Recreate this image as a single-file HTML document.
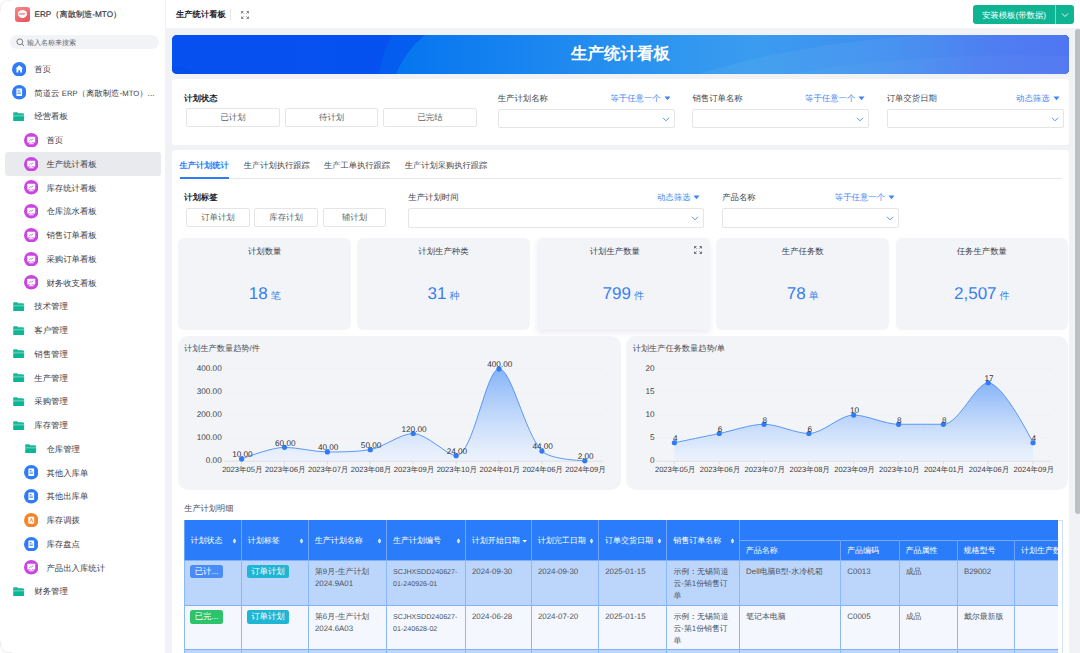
<!DOCTYPE html>
<html><head><meta charset="utf-8"><title>生产统计看板</title>
<style>
*{margin:0;padding:0;box-sizing:border-box}
html,body{width:1080px;height:653px;overflow:hidden;background:#f1f2f6;font-family:"Liberation Sans",sans-serif;color:#3d4149;text-rendering:geometricPrecision}
.a{position:absolute;white-space:nowrap}
#side{position:absolute;left:0;top:0;width:165.2px;height:653px;background:#fff}
.si{position:absolute;left:0;width:165px;height:24px;font-size:8.6px;color:#434750;line-height:24px}
.ic{position:absolute;width:14.5px;height:14.5px;border-radius:50%;top:4.75px}
.fold{position:absolute;width:11.5px;height:9px;top:7.5px}
#top{position:absolute;left:166.4px;top:0;width:914px;height:28.3px;background:#fff}
.card{position:absolute;background:#fff;border-radius:3px}
.lbl{position:absolute;font-size:8.4px;color:#41454d;white-space:nowrap;line-height:12px}
.blbl{position:absolute;font-size:8.4px;color:#1f2329;font-weight:bold;white-space:nowrap;line-height:12px}
.btn{position:absolute;border:1px solid #e3e5e9;border-radius:2px;font-size:8.4px;color:#5b5f67;text-align:center;background:#fff}
.sel{position:absolute;border:1px solid #e3e5e9;border-radius:2px;background:#fff}
.link{position:absolute;font-size:8.4px;color:#3e84f4;white-space:nowrap;line-height:12px;text-align:right}
.stat{position:absolute;background:#f3f4f7;border-radius:6px}
.stt{position:absolute;left:0;right:0;text-align:center;font-size:8.4px;color:#41454d;line-height:12px}
.stv{position:absolute;left:0;right:0;text-align:center;color:#3a7ff0;line-height:20px}
.chart{position:absolute;background:#f3f4f7;border-radius:10px}
</style></head><body>
<div id="side"><div class="a" style="left:0;top:0;width:12px;height:12px;border-top-left-radius:8px;border-left:1px solid #f2f2f2;border-top:1px solid #f2f2f2"></div><div class="a" style="left:0;top:641px;width:12px;height:12px;border-bottom-left-radius:8px;border-left:1px solid #eeeeee;border-bottom:1px solid #eeeeee"></div><div class="a" style="left:15px;top:7px;width:14.5px;height:14.5px;border-radius:3px;background:linear-gradient(150deg,#f58a89,#e7525a)"><div style="position:absolute;left:2.8px;top:3.3px;width:9px;height:8px;border-radius:50%;background:#fff"></div><div style="position:absolute;left:0;top:5.6px;width:14.5px;text-align:center;font-size:3px;line-height:3.5px;font-weight:bold;color:#e85a5f">ERP</div></div><div class="a" style="left:34.5px;top:8px;font-size:8.2px;line-height:14px;color:#30343b;-webkit-text-stroke:0.15px #30343b">ERP（离散制造-MTO）</div><div class="a" style="left:9.5px;top:35px;width:149px;height:14px;border-radius:7px;background:#f2f3f6"></div><svg class="a" style="left:15.5px;top:38px" width="9" height="9" viewBox="0 0 9 9"><circle cx="3.8" cy="3.8" r="2.9" fill="none" stroke="#6b6f78" stroke-width="0.9"/><line x1="6" y1="6" x2="8" y2="8" stroke="#6b6f78" stroke-width="0.9"/></svg><div class="a" style="left:27px;top:37.5px;font-size:7px;line-height:12px;color:#62666e">输入名称来搜索</div><svg class="a" style="left:11.75px;top:61.50px" width="14.5" height="14.5" viewBox="0 0 14.5 14.5"><circle cx="7.25" cy="7.25" r="7.25" fill="#2f7cf6"/><path d="M7.25 3.2 L11 6.6 L10 6.6 L10 10.6 L8.2 10.6 L8.2 8.3 L6.3 8.3 L6.3 10.6 L4.5 10.6 L4.5 6.6 L3.5 6.6 Z" fill="#fff"/></svg><div class="a" style="left:34.30px;top:62.75px;font-size:8.4px;line-height:12px;color:#3c4048">首页</div><svg class="a" style="left:11.75px;top:85.25px" width="14.5" height="14.5" viewBox="0 0 14.5 14.5"><circle cx="7.25" cy="7.25" r="7.25" fill="#2f7cf6"/><rect x="4.4" y="3.4" width="5.7" height="7.7" rx="0.6" fill="#fff"/><rect x="5.5" y="5.3" width="2.2" height="0.7" fill="#2f7cf6"/><rect x="5.5" y="6.7" width="3.4" height="0.7" fill="#2f7cf6"/><rect x="5.5" y="8.1" width="3.4" height="0.7" fill="#2f7cf6"/></svg><div class="a" style="left:34.30px;top:86.50px;font-size:8.4px;line-height:12px;color:#3c4048">简道云 <span style="font-size:7.7px">ERP</span>（离散制造-<span style="font-size:7.7px">MTO</span>）...</div><svg class="a" style="left:13.20px;top:111.85px" width="12" height="10" viewBox="0 0 12 10"><path d="M0.2,1 Q0.2,0.2 1,0.2 L4.3,0.2 L5.3,1.3 L10.1,1.3 Q10.9,1.3 10.9,2.1 L10.9,8.4 Q10.9,9.1 10.2,9.1 L1,9.1 Q0.2,9.1 0.2,8.4 Z" fill="#1ab998"/><rect x="0.2" y="3.5" width="11" height="1" fill="#8fdcc9"/><path d="M1.4,4.5 L11.4,4.5 L10.5,8.6 Q10.4,9.1 9.9,9.1 L1.2,9.1 Q0.6,9.1 0.7,8.5 Z" fill="#0cb596"/></svg><div class="a" style="left:34.30px;top:110.25px;font-size:8.4px;line-height:12px;color:#3c4048">经营看板</div><svg class="a" style="left:23.65px;top:132.75px" width="14.5" height="14.5" viewBox="0 0 14.5 14.5"><circle cx="7.25" cy="7.25" r="7.25" fill="#c945e2"/><rect x="3.3" y="3.8" width="7.9" height="5.6" rx="0.5" fill="#fff"/><rect x="6.5" y="9.3" width="1.5" height="1.1" fill="#fff"/><rect x="4.7" y="10.3" width="5.1" height="1" rx="0.3" fill="#fff"/><path d="M5.2 7.6 L6.8 6.5 L7.7 7.1 L9.4 5.6" stroke="#c945e2" stroke-width="0.75" fill="none"/></svg><div class="a" style="left:46.40px;top:134.00px;font-size:8.4px;line-height:12px;color:#3c4048">首页</div><div class="a" style="left:5px;top:152.00px;width:155.5px;height:23.5px;border-radius:3px;background:#e9eaee"></div><svg class="a" style="left:23.65px;top:156.50px" width="14.5" height="14.5" viewBox="0 0 14.5 14.5"><circle cx="7.25" cy="7.25" r="7.25" fill="#c945e2"/><rect x="3.3" y="3.8" width="7.9" height="5.6" rx="0.5" fill="#fff"/><rect x="6.5" y="9.3" width="1.5" height="1.1" fill="#fff"/><rect x="4.7" y="10.3" width="5.1" height="1" rx="0.3" fill="#fff"/><path d="M5.2 7.6 L6.8 6.5 L7.7 7.1 L9.4 5.6" stroke="#c945e2" stroke-width="0.75" fill="none"/></svg><div class="a" style="left:46.40px;top:157.75px;font-size:8.4px;line-height:12px;color:#3c4048">生产统计看板</div><svg class="a" style="left:23.65px;top:180.25px" width="14.5" height="14.5" viewBox="0 0 14.5 14.5"><circle cx="7.25" cy="7.25" r="7.25" fill="#c945e2"/><rect x="3.3" y="3.8" width="7.9" height="5.6" rx="0.5" fill="#fff"/><rect x="6.5" y="9.3" width="1.5" height="1.1" fill="#fff"/><rect x="4.7" y="10.3" width="5.1" height="1" rx="0.3" fill="#fff"/><path d="M5.2 7.6 L6.8 6.5 L7.7 7.1 L9.4 5.6" stroke="#c945e2" stroke-width="0.75" fill="none"/></svg><div class="a" style="left:46.40px;top:181.50px;font-size:8.4px;line-height:12px;color:#3c4048">库存统计看板</div><svg class="a" style="left:23.65px;top:204.00px" width="14.5" height="14.5" viewBox="0 0 14.5 14.5"><circle cx="7.25" cy="7.25" r="7.25" fill="#c945e2"/><rect x="3.3" y="3.8" width="7.9" height="5.6" rx="0.5" fill="#fff"/><rect x="6.5" y="9.3" width="1.5" height="1.1" fill="#fff"/><rect x="4.7" y="10.3" width="5.1" height="1" rx="0.3" fill="#fff"/><path d="M5.2 7.6 L6.8 6.5 L7.7 7.1 L9.4 5.6" stroke="#c945e2" stroke-width="0.75" fill="none"/></svg><div class="a" style="left:46.40px;top:205.25px;font-size:8.4px;line-height:12px;color:#3c4048">仓库流水看板</div><svg class="a" style="left:23.65px;top:227.75px" width="14.5" height="14.5" viewBox="0 0 14.5 14.5"><circle cx="7.25" cy="7.25" r="7.25" fill="#c945e2"/><rect x="3.3" y="3.8" width="7.9" height="5.6" rx="0.5" fill="#fff"/><rect x="6.5" y="9.3" width="1.5" height="1.1" fill="#fff"/><rect x="4.7" y="10.3" width="5.1" height="1" rx="0.3" fill="#fff"/><path d="M5.2 7.6 L6.8 6.5 L7.7 7.1 L9.4 5.6" stroke="#c945e2" stroke-width="0.75" fill="none"/></svg><div class="a" style="left:46.40px;top:229.00px;font-size:8.4px;line-height:12px;color:#3c4048">销售订单看板</div><svg class="a" style="left:23.65px;top:251.50px" width="14.5" height="14.5" viewBox="0 0 14.5 14.5"><circle cx="7.25" cy="7.25" r="7.25" fill="#c945e2"/><rect x="3.3" y="3.8" width="7.9" height="5.6" rx="0.5" fill="#fff"/><rect x="6.5" y="9.3" width="1.5" height="1.1" fill="#fff"/><rect x="4.7" y="10.3" width="5.1" height="1" rx="0.3" fill="#fff"/><path d="M5.2 7.6 L6.8 6.5 L7.7 7.1 L9.4 5.6" stroke="#c945e2" stroke-width="0.75" fill="none"/></svg><div class="a" style="left:46.40px;top:252.75px;font-size:8.4px;line-height:12px;color:#3c4048">采购订单看板</div><svg class="a" style="left:23.65px;top:275.25px" width="14.5" height="14.5" viewBox="0 0 14.5 14.5"><circle cx="7.25" cy="7.25" r="7.25" fill="#c945e2"/><rect x="3.3" y="3.8" width="7.9" height="5.6" rx="0.5" fill="#fff"/><rect x="6.5" y="9.3" width="1.5" height="1.1" fill="#fff"/><rect x="4.7" y="10.3" width="5.1" height="1" rx="0.3" fill="#fff"/><path d="M5.2 7.6 L6.8 6.5 L7.7 7.1 L9.4 5.6" stroke="#c945e2" stroke-width="0.75" fill="none"/></svg><div class="a" style="left:46.40px;top:276.50px;font-size:8.4px;line-height:12px;color:#3c4048">财务收支看板</div><svg class="a" style="left:13.20px;top:301.85px" width="12" height="10" viewBox="0 0 12 10"><path d="M0.2,1 Q0.2,0.2 1,0.2 L4.3,0.2 L5.3,1.3 L10.1,1.3 Q10.9,1.3 10.9,2.1 L10.9,8.4 Q10.9,9.1 10.2,9.1 L1,9.1 Q0.2,9.1 0.2,8.4 Z" fill="#1ab998"/><rect x="0.2" y="3.5" width="11" height="1" fill="#8fdcc9"/><path d="M1.4,4.5 L11.4,4.5 L10.5,8.6 Q10.4,9.1 9.9,9.1 L1.2,9.1 Q0.6,9.1 0.7,8.5 Z" fill="#0cb596"/></svg><div class="a" style="left:34.30px;top:300.25px;font-size:8.4px;line-height:12px;color:#3c4048">技术管理</div><svg class="a" style="left:13.20px;top:325.60px" width="12" height="10" viewBox="0 0 12 10"><path d="M0.2,1 Q0.2,0.2 1,0.2 L4.3,0.2 L5.3,1.3 L10.1,1.3 Q10.9,1.3 10.9,2.1 L10.9,8.4 Q10.9,9.1 10.2,9.1 L1,9.1 Q0.2,9.1 0.2,8.4 Z" fill="#1ab998"/><rect x="0.2" y="3.5" width="11" height="1" fill="#8fdcc9"/><path d="M1.4,4.5 L11.4,4.5 L10.5,8.6 Q10.4,9.1 9.9,9.1 L1.2,9.1 Q0.6,9.1 0.7,8.5 Z" fill="#0cb596"/></svg><div class="a" style="left:34.30px;top:324.00px;font-size:8.4px;line-height:12px;color:#3c4048">客户管理</div><svg class="a" style="left:13.20px;top:349.35px" width="12" height="10" viewBox="0 0 12 10"><path d="M0.2,1 Q0.2,0.2 1,0.2 L4.3,0.2 L5.3,1.3 L10.1,1.3 Q10.9,1.3 10.9,2.1 L10.9,8.4 Q10.9,9.1 10.2,9.1 L1,9.1 Q0.2,9.1 0.2,8.4 Z" fill="#1ab998"/><rect x="0.2" y="3.5" width="11" height="1" fill="#8fdcc9"/><path d="M1.4,4.5 L11.4,4.5 L10.5,8.6 Q10.4,9.1 9.9,9.1 L1.2,9.1 Q0.6,9.1 0.7,8.5 Z" fill="#0cb596"/></svg><div class="a" style="left:34.30px;top:347.75px;font-size:8.4px;line-height:12px;color:#3c4048">销售管理</div><svg class="a" style="left:13.20px;top:373.10px" width="12" height="10" viewBox="0 0 12 10"><path d="M0.2,1 Q0.2,0.2 1,0.2 L4.3,0.2 L5.3,1.3 L10.1,1.3 Q10.9,1.3 10.9,2.1 L10.9,8.4 Q10.9,9.1 10.2,9.1 L1,9.1 Q0.2,9.1 0.2,8.4 Z" fill="#1ab998"/><rect x="0.2" y="3.5" width="11" height="1" fill="#8fdcc9"/><path d="M1.4,4.5 L11.4,4.5 L10.5,8.6 Q10.4,9.1 9.9,9.1 L1.2,9.1 Q0.6,9.1 0.7,8.5 Z" fill="#0cb596"/></svg><div class="a" style="left:34.30px;top:371.50px;font-size:8.4px;line-height:12px;color:#3c4048">生产管理</div><svg class="a" style="left:13.20px;top:396.85px" width="12" height="10" viewBox="0 0 12 10"><path d="M0.2,1 Q0.2,0.2 1,0.2 L4.3,0.2 L5.3,1.3 L10.1,1.3 Q10.9,1.3 10.9,2.1 L10.9,8.4 Q10.9,9.1 10.2,9.1 L1,9.1 Q0.2,9.1 0.2,8.4 Z" fill="#1ab998"/><rect x="0.2" y="3.5" width="11" height="1" fill="#8fdcc9"/><path d="M1.4,4.5 L11.4,4.5 L10.5,8.6 Q10.4,9.1 9.9,9.1 L1.2,9.1 Q0.6,9.1 0.7,8.5 Z" fill="#0cb596"/></svg><div class="a" style="left:34.30px;top:395.25px;font-size:8.4px;line-height:12px;color:#3c4048">采购管理</div><svg class="a" style="left:13.20px;top:420.60px" width="12" height="10" viewBox="0 0 12 10"><path d="M0.2,1 Q0.2,0.2 1,0.2 L4.3,0.2 L5.3,1.3 L10.1,1.3 Q10.9,1.3 10.9,2.1 L10.9,8.4 Q10.9,9.1 10.2,9.1 L1,9.1 Q0.2,9.1 0.2,8.4 Z" fill="#1ab998"/><rect x="0.2" y="3.5" width="11" height="1" fill="#8fdcc9"/><path d="M1.4,4.5 L11.4,4.5 L10.5,8.6 Q10.4,9.1 9.9,9.1 L1.2,9.1 Q0.6,9.1 0.7,8.5 Z" fill="#0cb596"/></svg><div class="a" style="left:34.30px;top:419.00px;font-size:8.4px;line-height:12px;color:#3c4048">库存管理</div><svg class="a" style="left:25.10px;top:444.35px" width="12" height="10" viewBox="0 0 12 10"><path d="M0.2,1 Q0.2,0.2 1,0.2 L4.3,0.2 L5.3,1.3 L10.1,1.3 Q10.9,1.3 10.9,2.1 L10.9,8.4 Q10.9,9.1 10.2,9.1 L1,9.1 Q0.2,9.1 0.2,8.4 Z" fill="#1ab998"/><rect x="0.2" y="3.5" width="11" height="1" fill="#8fdcc9"/><path d="M1.4,4.5 L11.4,4.5 L10.5,8.6 Q10.4,9.1 9.9,9.1 L1.2,9.1 Q0.6,9.1 0.7,8.5 Z" fill="#0cb596"/></svg><div class="a" style="left:46.40px;top:442.75px;font-size:8.4px;line-height:12px;color:#3c4048">仓库管理</div><svg class="a" style="left:23.65px;top:465.25px" width="14.5" height="14.5" viewBox="0 0 14.5 14.5"><circle cx="7.25" cy="7.25" r="7.25" fill="#2f7cf6"/><rect x="4.4" y="3.4" width="5.7" height="7.7" rx="0.6" fill="#fff"/><rect x="5.5" y="5.3" width="2.2" height="0.7" fill="#2f7cf6"/><rect x="5.5" y="6.7" width="3.4" height="0.7" fill="#2f7cf6"/><rect x="5.5" y="8.1" width="3.4" height="0.7" fill="#2f7cf6"/></svg><div class="a" style="left:46.40px;top:466.50px;font-size:8.4px;line-height:12px;color:#3c4048">其他入库单</div><svg class="a" style="left:23.65px;top:489.00px" width="14.5" height="14.5" viewBox="0 0 14.5 14.5"><circle cx="7.25" cy="7.25" r="7.25" fill="#2f7cf6"/><rect x="4.4" y="3.4" width="5.7" height="7.7" rx="0.6" fill="#fff"/><rect x="5.5" y="5.3" width="2.2" height="0.7" fill="#2f7cf6"/><rect x="5.5" y="6.7" width="3.4" height="0.7" fill="#2f7cf6"/><rect x="5.5" y="8.1" width="3.4" height="0.7" fill="#2f7cf6"/></svg><div class="a" style="left:46.40px;top:490.25px;font-size:8.4px;line-height:12px;color:#3c4048">其他出库单</div><svg class="a" style="left:23.65px;top:512.75px" width="14.5" height="14.5" viewBox="0 0 14.5 14.5"><circle cx="7.25" cy="7.25" r="7.25" fill="#f7842b"/><rect x="4.3" y="3.8" width="5.9" height="6.9" rx="0.6" fill="#fff"/><path d="M5.7 9.3 L7.25 5.3 L8.8 9.3" stroke="#f7842b" stroke-width="0.8" fill="none"/></svg><div class="a" style="left:46.40px;top:514.00px;font-size:8.4px;line-height:12px;color:#3c4048">库存调拨</div><svg class="a" style="left:23.65px;top:536.50px" width="14.5" height="14.5" viewBox="0 0 14.5 14.5"><circle cx="7.25" cy="7.25" r="7.25" fill="#2f7cf6"/><rect x="4.4" y="3.4" width="5.7" height="7.7" rx="0.6" fill="#fff"/><rect x="5.5" y="5.3" width="2.2" height="0.7" fill="#2f7cf6"/><rect x="5.5" y="6.7" width="3.4" height="0.7" fill="#2f7cf6"/><rect x="5.5" y="8.1" width="3.4" height="0.7" fill="#2f7cf6"/></svg><div class="a" style="left:46.40px;top:537.75px;font-size:8.4px;line-height:12px;color:#3c4048">库存盘点</div><svg class="a" style="left:23.65px;top:560.25px" width="14.5" height="14.5" viewBox="0 0 14.5 14.5"><circle cx="7.25" cy="7.25" r="7.25" fill="#c945e2"/><rect x="3.3" y="3.8" width="7.9" height="5.6" rx="0.5" fill="#fff"/><rect x="6.5" y="9.3" width="1.5" height="1.1" fill="#fff"/><rect x="4.7" y="10.3" width="5.1" height="1" rx="0.3" fill="#fff"/><path d="M5.2 7.6 L6.8 6.5 L7.7 7.1 L9.4 5.6" stroke="#c945e2" stroke-width="0.75" fill="none"/></svg><div class="a" style="left:46.40px;top:561.50px;font-size:8.4px;line-height:12px;color:#3c4048">产品出入库统计</div><svg class="a" style="left:13.20px;top:586.85px" width="12" height="10" viewBox="0 0 12 10"><path d="M0.2,1 Q0.2,0.2 1,0.2 L4.3,0.2 L5.3,1.3 L10.1,1.3 Q10.9,1.3 10.9,2.1 L10.9,8.4 Q10.9,9.1 10.2,9.1 L1,9.1 Q0.2,9.1 0.2,8.4 Z" fill="#1ab998"/><rect x="0.2" y="3.5" width="11" height="1" fill="#8fdcc9"/><path d="M1.4,4.5 L11.4,4.5 L10.5,8.6 Q10.4,9.1 9.9,9.1 L1.2,9.1 Q0.6,9.1 0.7,8.5 Z" fill="#0cb596"/></svg><div class="a" style="left:34.30px;top:585.25px;font-size:8.4px;line-height:12px;color:#3c4048">财务管理</div></div><div id="top"></div><div class="a" style="left:176px;top:8px;font-size:8.3px;line-height:12px;color:#1f2329;font-weight:bold">生产统计看板</div><div class="a" style="left:230px;top:9px;width:1px;height:11px;background:#e5e6eb"></div><svg class="a" style="left:241px;top:10.5px" width="8" height="8" viewBox="0 0 8 8" fill="none" stroke="#6b6f78" stroke-width="0.8"><path d="M0.5 2.5V0.5H2.5M5.5 0.5H7.5V2.5M7.5 5.5V7.5H5.5M2.5 7.5H0.5V5.5"/><path d="M0.7 0.7L2.6 2.6M7.3 0.7L5.4 2.6M7.3 7.3L5.4 5.4M0.7 7.3L2.6 5.4"/></svg><div class="a" style="left:972.5px;top:5px;width:101.5px;height:19px;border-radius:3px;background:#0fb493"></div><div class="a" style="left:1055.3px;top:5px;width:0.8px;height:19px;background:#7fd8bf"></div><div class="a" style="left:972.5px;top:8.5px;width:83px;text-align:center;font-size:8.4px;line-height:12px;color:#fff">安装模板(带数据)</div><svg class="a" style="left:1061px;top:11.5px" width="8" height="6" viewBox="0 0 8 6"><path d="M1 1.5 L4 4.5 L7 1.5" stroke="#fff" stroke-width="0.9" fill="none"/></svg><div class="a" style="left:1075.3px;top:29px;width:6px;height:485px;border-radius:3px;background:#bcbfc5"></div><div class="a" style="left:172px;top:35px;width:897px;height:38.5px;border-radius:5px;overflow:hidden;background:#0550ef">
<svg style="position:absolute;left:0;top:0" width="897" height="39" viewBox="0 0 897 39">
<defs><linearGradient id="bg2" gradientUnits="userSpaceOnUse" x1="224" y1="0" x2="897" y2="0">
<stop offset="0" stop-color="#0575f0"/><stop offset="0.4" stop-color="#2e95ef"/><stop offset="0.53" stop-color="#3a9cef"/><stop offset="0.73" stop-color="#3f8ff0"/><stop offset="0.89" stop-color="#4577f1"/><stop offset="1" stop-color="#466ff2"/></linearGradient>
<linearGradient id="bg0" x1="0" y1="0" x2="1" y2="0"><stop offset="0" stop-color="#0650ef"/><stop offset="1" stop-color="#0556ef"/></linearGradient></defs>
<rect x="0" y="0" width="897" height="39" fill="url(#bg0)"/>
<path d="M0,30 Q20,36 30,39 L0,39 Z" fill="#034ae8" opacity="0.5"/>
<path d="M207,39 Q211,14 221,0 L897,0 L897,39 Z" fill="#055def"/>
<path d="M224,39 Q234,15 253,0 L897,0 L897,39 Z" fill="url(#bg2)"/>
<path d="M527,39 C590,18 680,4 760,0 L897,0 L897,39 Z" fill="#ffffff" opacity="0.05"/>
<path d="M618,39 C700,24 800,18 897,21 L897,39 Z" fill="#ffffff" opacity="0.03"/>
</svg>
<div style="position:absolute;left:0;right:0;top:9px;text-align:center;font-size:16.5px;line-height:20px;font-weight:bold;color:#fff">生产统计看板</div></div><div class="card" style="left:172px;top:79px;width:897px;height:65.5px"></div><div class="blbl" style="left:184px;top:92px">计划状态</div><div class="btn" style="left:186.40px;top:108.3px;width:93.30px;height:19.2px;line-height:17.2px">已计划</div><div class="btn" style="left:284.80px;top:108.3px;width:93.70px;height:19.2px;line-height:17.2px">待计划</div><div class="btn" style="left:383.20px;top:108.3px;width:93.70px;height:19.2px;line-height:17.2px">已完结</div><div class="lbl" style="left:497.70px;top:92px">生产计划名称</div><div class="link" style="right:419.30px;top:92px">等于任意一个</div><svg class="a" style="left:663.70px;top:95.50px" width="7" height="5" viewBox="0 0 7 5"><path d="M0.5 0.5 L6.5 0.5 L3.5 4.2 Z" fill="#3e84f4"/></svg><div class="sel" style="left:497.70px;top:109.3px;width:177.00px;height:18.9px"></div><svg class="a" style="left:661.70px;top:117.00px" width="8" height="5" viewBox="0 0 8 5"><path d="M1 0.8 L4 3.8 L7 0.8" stroke="#3e84f4" stroke-width="0.9" fill="none"/></svg><div class="lbl" style="left:692.40px;top:92px">销售订单名称</div><div class="link" style="right:224.70px;top:92px">等于任意一个</div><svg class="a" style="left:858.30px;top:95.50px" width="7" height="5" viewBox="0 0 7 5"><path d="M0.5 0.5 L6.5 0.5 L3.5 4.2 Z" fill="#3e84f4"/></svg><div class="sel" style="left:692.40px;top:109.3px;width:176.90px;height:18.9px"></div><svg class="a" style="left:856.30px;top:117.00px" width="8" height="5" viewBox="0 0 8 5"><path d="M1 0.8 L4 3.8 L7 0.8" stroke="#3e84f4" stroke-width="0.9" fill="none"/></svg><div class="lbl" style="left:886.70px;top:92px">订单交货日期</div><div class="link" style="right:30.40px;top:92px">动态筛选</div><svg class="a" style="left:1052.60px;top:95.50px" width="7" height="5" viewBox="0 0 7 5"><path d="M0.5 0.5 L6.5 0.5 L3.5 4.2 Z" fill="#3e84f4"/></svg><div class="sel" style="left:886.70px;top:109.3px;width:176.90px;height:18.9px"></div><svg class="a" style="left:1050.60px;top:117.00px" width="8" height="5" viewBox="0 0 8 5"><path d="M1 0.8 L4 3.8 L7 0.8" stroke="#3e84f4" stroke-width="0.9" fill="none"/></svg><div class="card" style="left:172px;top:150px;width:897px;height:510px"></div><div class="a" style="left:179.50px;top:159.6px;font-size:8.2px;line-height:12px;color:#2f7cf6;font-weight:bold">生产计划统计</div><div class="a" style="left:243.80px;top:159.6px;font-size:8.25px;line-height:12px;color:#41454d">生产计划执行跟踪</div><div class="a" style="left:323.90px;top:159.6px;font-size:8.25px;line-height:12px;color:#41454d">生产工单执行跟踪</div><div class="a" style="left:404.80px;top:159.6px;font-size:8.25px;line-height:12px;color:#41454d">生产计划采购执行跟踪</div><div class="a" style="left:179px;top:178px;width:883px;height:1px;background:#e5e6eb"></div><div class="a" style="left:179.5px;top:176.8px;width:49px;height:2px;background:#2f7cf6"></div><div class="blbl" style="left:184px;top:191px">计划标签</div><div class="btn" style="left:186.10px;top:208px;width:63.60px;height:18.8px;line-height:16.8px">订单计划</div><div class="btn" style="left:254.40px;top:208px;width:63.40px;height:18.8px;line-height:16.8px">库存计划</div><div class="btn" style="left:323.00px;top:208px;width:63.10px;height:18.8px;line-height:16.8px">辅计划</div><div class="lbl" style="left:408.30px;top:191px">生产计划时间</div><div class="link" style="right:389.60px;top:191px">动态筛选</div><svg class="a" style="left:693.40px;top:194.50px" width="7" height="5" viewBox="0 0 7 5"><path d="M0.5 0.5 L6.5 0.5 L3.5 4.2 Z" fill="#3e84f4"/></svg><div class="sel" style="left:408.30px;top:208px;width:296.10px;height:19.8px"></div><svg class="a" style="left:691.40px;top:216.00px" width="8" height="5" viewBox="0 0 8 5"><path d="M1 0.8 L4 3.8 L7 0.8" stroke="#3e84f4" stroke-width="0.9" fill="none"/></svg><div class="lbl" style="left:722.20px;top:191px">产品名称</div><div class="link" style="right:195.00px;top:191px">等于任意一个</div><svg class="a" style="left:888.00px;top:194.50px" width="7" height="5" viewBox="0 0 7 5"><path d="M0.5 0.5 L6.5 0.5 L3.5 4.2 Z" fill="#3e84f4"/></svg><div class="sel" style="left:722.20px;top:208px;width:176.80px;height:19.8px"></div><svg class="a" style="left:886.00px;top:216.00px" width="8" height="5" viewBox="0 0 8 5"><path d="M1 0.8 L4 3.8 L7 0.8" stroke="#3e84f4" stroke-width="0.9" fill="none"/></svg><div class="stat" style="left:178.30px;top:237.8px;width:172.80px;height:92.2px"><div class="stt" style="top:7px">计划数量</div><div class="stv" style="top:46px"><span style="font-size:17px">18</span><span style="font-size:10px;margin-left:3px">笔</span></div></div><div class="stat" style="left:357.20px;top:237.8px;width:172.50px;height:92.2px"><div class="stt" style="top:7px">计划生产种类</div><div class="stv" style="top:46px"><span style="font-size:17px">31</span><span style="font-size:10px;margin-left:3px">种</span></div></div><div class="stat" style="left:536.90px;top:237.8px;width:172.80px;height:92.2px;box-shadow:0 3px 6px rgba(90,60,150,0.10);border-radius:6px 6px 1px 1px"><div class="stt" style="top:7px;right:17px">计划生产数量</div><div class="stv" style="top:46px"><span style="font-size:17px">799</span><span style="font-size:10px;margin-left:3px">件</span></div><svg style="position:absolute;left:157px;top:8.5px" width="8" height="8" viewBox="0 0 8 8" fill="none" stroke="#55595f" stroke-width="0.8"><path d="M0.5 2.5V0.5H2.5M5.5 0.5H7.5V2.5M7.5 5.5V7.5H5.5M2.5 7.5H0.5V5.5"/><path d="M0.7 0.7L2.6 2.6M7.3 0.7L5.4 2.6M7.3 7.3L5.4 5.4M0.7 7.3L2.6 5.4"/></svg></div><div class="stat" style="left:716.30px;top:237.8px;width:172.90px;height:92.2px"><div class="stt" style="top:7px">生产任务数</div><div class="stv" style="top:46px"><span style="font-size:17px">78</span><span style="font-size:10px;margin-left:3px">单</span></div></div><div class="stat" style="left:895.60px;top:237.8px;width:172.40px;height:92.2px"><div class="stt" style="top:7px">任务生产数量</div><div class="stv" style="top:46px"><span style="font-size:17px">2,507</span><span style="font-size:10px;margin-left:3px">件</span></div></div><div class="chart" style="left:177.70px;top:336.4px;width:442.90px;height:153.3px"></div><div class="a" style="left:184.00px;top:343px;font-size:8.2px;line-height:12px;color:#4a4e57">计划生产数量趋势/件</div><div class="a" style="right:858.30px;top:456.20px;font-size:8.2px;line-height:10px;color:#42454c;text-align:right">0.00</div><div class="a" style="right:858.30px;top:433.12px;font-size:8.2px;line-height:10px;color:#42454c;text-align:right">100.00</div><div class="a" style="right:858.30px;top:410.05px;font-size:8.2px;line-height:10px;color:#42454c;text-align:right">200.00</div><div class="a" style="right:858.30px;top:386.98px;font-size:8.2px;line-height:10px;color:#42454c;text-align:right">300.00</div><div class="a" style="right:858.30px;top:363.90px;font-size:8.2px;line-height:10px;color:#42454c;text-align:right">400.00</div><svg class="a" style="left:0;top:0" width="1080" height="653" viewBox="0 0 1080 653"><defs><linearGradient id="g1" x1="0" y1="0" x2="0" y2="1"><stop offset="0" stop-color="#86b4f8"/><stop offset="1" stop-color="#eaf2fe" stop-opacity="0.7"/></linearGradient></defs><line x1="224.00" y1="438.12" x2="603.30" y2="438.12" stroke="#e4e6ea" stroke-width="0.5" stroke-dasharray="2 2"/><line x1="224.00" y1="415.05" x2="603.30" y2="415.05" stroke="#e4e6ea" stroke-width="0.5" stroke-dasharray="2 2"/><line x1="224.00" y1="391.98" x2="603.30" y2="391.98" stroke="#e4e6ea" stroke-width="0.5" stroke-dasharray="2 2"/><line x1="224.00" y1="368.90" x2="603.30" y2="368.90" stroke="#e4e6ea" stroke-width="0.5" stroke-dasharray="2 2"/><path d="M241.60,458.89 C241.60,458.89 271.44,447.36 284.50,447.36 C297.18,447.36 314.50,451.97 327.40,451.97 C340.24,451.97 357.85,451.97 370.30,449.66 C383.59,447.20 400.66,433.51 413.20,433.51 C426.40,433.51 447.53,455.66 456.10,455.66 C473.27,455.66 485.85,368.90 499.00,368.90 C511.59,368.90 524.44,432.36 541.90,451.05 C550.18,459.91 584.80,460.74 584.80,460.74 L584.80,461.20 L241.60,461.20 Z" fill="url(#g1)"/><line x1="224.00" y1="461.20" x2="603.30" y2="461.20" stroke="#d9dce1" stroke-width="0.8"/><line x1="241.60" y1="461.20" x2="241.60" y2="464.20" stroke="#c9ccd2" stroke-width="0.6"/><line x1="284.50" y1="461.20" x2="284.50" y2="464.20" stroke="#c9ccd2" stroke-width="0.6"/><line x1="327.40" y1="461.20" x2="327.40" y2="464.20" stroke="#c9ccd2" stroke-width="0.6"/><line x1="370.30" y1="461.20" x2="370.30" y2="464.20" stroke="#c9ccd2" stroke-width="0.6"/><line x1="413.20" y1="461.20" x2="413.20" y2="464.20" stroke="#c9ccd2" stroke-width="0.6"/><line x1="456.10" y1="461.20" x2="456.10" y2="464.20" stroke="#c9ccd2" stroke-width="0.6"/><line x1="499.00" y1="461.20" x2="499.00" y2="464.20" stroke="#c9ccd2" stroke-width="0.6"/><line x1="541.90" y1="461.20" x2="541.90" y2="464.20" stroke="#c9ccd2" stroke-width="0.6"/><line x1="584.80" y1="461.20" x2="584.80" y2="464.20" stroke="#c9ccd2" stroke-width="0.6"/><path d="M241.60,458.89 C241.60,458.89 271.44,447.36 284.50,447.36 C297.18,447.36 314.50,451.97 327.40,451.97 C340.24,451.97 357.85,451.97 370.30,449.66 C383.59,447.20 400.66,433.51 413.20,433.51 C426.40,433.51 447.53,455.66 456.10,455.66 C473.27,455.66 485.85,368.90 499.00,368.90 C511.59,368.90 524.44,432.36 541.90,451.05 C550.18,459.91 584.80,460.74 584.80,460.74" fill="none" stroke="#4a8ff7" stroke-width="0.9"/><circle cx="241.60" cy="458.89" r="2.6" fill="#2f7cf6"/><circle cx="284.50" cy="447.36" r="2.6" fill="#2f7cf6"/><circle cx="327.40" cy="451.97" r="2.6" fill="#2f7cf6"/><circle cx="370.30" cy="449.66" r="2.6" fill="#2f7cf6"/><circle cx="413.20" cy="433.51" r="2.6" fill="#2f7cf6"/><circle cx="456.10" cy="455.66" r="2.6" fill="#2f7cf6"/><circle cx="499.00" cy="368.90" r="2.6" fill="#2f7cf6"/><circle cx="541.90" cy="451.05" r="2.6" fill="#2f7cf6"/><circle cx="584.80" cy="460.74" r="2.6" fill="#2f7cf6"/></svg><div class="a" style="left:222.40px;top:450.29px;width:40px;text-align:center;font-size:8.2px;line-height:10px;color:#33363c">10.00</div><div class="a" style="left:217.40px;top:464.80px;width:50px;text-align:center;font-size:7.6px;line-height:10px;color:#3b3e45">2023年05月</div><div class="a" style="left:265.30px;top:438.75px;width:40px;text-align:center;font-size:8.2px;line-height:10px;color:#33363c">60.00</div><div class="a" style="left:260.30px;top:464.80px;width:50px;text-align:center;font-size:7.6px;line-height:10px;color:#3b3e45">2023年06月</div><div class="a" style="left:308.20px;top:443.37px;width:40px;text-align:center;font-size:8.2px;line-height:10px;color:#33363c">40.00</div><div class="a" style="left:303.20px;top:464.80px;width:50px;text-align:center;font-size:7.6px;line-height:10px;color:#3b3e45">2023年07月</div><div class="a" style="left:351.10px;top:441.06px;width:40px;text-align:center;font-size:8.2px;line-height:10px;color:#33363c">50.00</div><div class="a" style="left:346.10px;top:464.80px;width:50px;text-align:center;font-size:7.6px;line-height:10px;color:#3b3e45">2023年08月</div><div class="a" style="left:394.00px;top:424.91px;width:40px;text-align:center;font-size:8.2px;line-height:10px;color:#33363c">120.00</div><div class="a" style="left:389.00px;top:464.80px;width:50px;text-align:center;font-size:7.6px;line-height:10px;color:#3b3e45">2023年09月</div><div class="a" style="left:436.90px;top:447.06px;width:40px;text-align:center;font-size:8.2px;line-height:10px;color:#33363c">24.00</div><div class="a" style="left:431.90px;top:464.80px;width:50px;text-align:center;font-size:7.6px;line-height:10px;color:#3b3e45">2023年10月</div><div class="a" style="left:479.80px;top:360.30px;width:40px;text-align:center;font-size:8.2px;line-height:10px;color:#33363c">400.00</div><div class="a" style="left:474.80px;top:464.80px;width:50px;text-align:center;font-size:7.6px;line-height:10px;color:#3b3e45">2024年01月</div><div class="a" style="left:522.70px;top:442.45px;width:40px;text-align:center;font-size:8.2px;line-height:10px;color:#33363c">44.00</div><div class="a" style="left:517.70px;top:464.80px;width:50px;text-align:center;font-size:7.6px;line-height:10px;color:#3b3e45">2024年06月</div><div class="a" style="left:565.60px;top:452.14px;width:40px;text-align:center;font-size:8.2px;line-height:10px;color:#33363c">2.00</div><div class="a" style="left:560.60px;top:464.80px;width:50px;text-align:center;font-size:7.6px;line-height:10px;color:#3b3e45">2024年09月</div><div class="chart" style="left:626.40px;top:336.4px;width:442.10px;height:153.3px"></div><div class="a" style="left:632.70px;top:343px;font-size:8.2px;line-height:12px;color:#4a4e57">计划生产任务数量趋势/单</div><div class="a" style="right:425.50px;top:456.20px;font-size:8.2px;line-height:10px;color:#42454c;text-align:right">0</div><div class="a" style="right:425.50px;top:433.12px;font-size:8.2px;line-height:10px;color:#42454c;text-align:right">5</div><div class="a" style="right:425.50px;top:410.05px;font-size:8.2px;line-height:10px;color:#42454c;text-align:right">10</div><div class="a" style="right:425.50px;top:386.98px;font-size:8.2px;line-height:10px;color:#42454c;text-align:right">15</div><div class="a" style="right:425.50px;top:363.90px;font-size:8.2px;line-height:10px;color:#42454c;text-align:right">20</div><svg class="a" style="left:0;top:0" width="1080" height="653" viewBox="0 0 1080 653"><defs><linearGradient id="g2" x1="0" y1="0" x2="0" y2="1"><stop offset="0" stop-color="#86b4f8"/><stop offset="1" stop-color="#eaf2fe" stop-opacity="0.7"/></linearGradient></defs><line x1="656.60" y1="438.12" x2="1051.00" y2="438.12" stroke="#e4e6ea" stroke-width="0.5" stroke-dasharray="2 2"/><line x1="656.60" y1="415.05" x2="1051.00" y2="415.05" stroke="#e4e6ea" stroke-width="0.5" stroke-dasharray="2 2"/><line x1="656.60" y1="391.98" x2="1051.00" y2="391.98" stroke="#e4e6ea" stroke-width="0.5" stroke-dasharray="2 2"/><line x1="656.60" y1="368.90" x2="1051.00" y2="368.90" stroke="#e4e6ea" stroke-width="0.5" stroke-dasharray="2 2"/><path d="M674.40,442.74 C674.40,442.74 705.78,436.28 719.23,433.51 C732.68,430.74 750.61,424.28 764.06,424.28 C777.51,424.28 795.83,433.51 808.89,433.51 C822.73,433.51 839.88,415.05 853.72,415.05 C866.78,415.05 884.96,424.28 898.55,424.28 C911.86,424.28 932.00,424.28 943.38,424.28 C958.90,424.28 976.12,382.75 988.21,382.75 C1003.02,382.75 1033.04,442.74 1033.04,442.74 L1033.04,461.20 L674.40,461.20 Z" fill="url(#g2)"/><line x1="656.60" y1="461.20" x2="1051.00" y2="461.20" stroke="#d9dce1" stroke-width="0.8"/><line x1="674.40" y1="461.20" x2="674.40" y2="464.20" stroke="#c9ccd2" stroke-width="0.6"/><line x1="719.23" y1="461.20" x2="719.23" y2="464.20" stroke="#c9ccd2" stroke-width="0.6"/><line x1="764.06" y1="461.20" x2="764.06" y2="464.20" stroke="#c9ccd2" stroke-width="0.6"/><line x1="808.89" y1="461.20" x2="808.89" y2="464.20" stroke="#c9ccd2" stroke-width="0.6"/><line x1="853.72" y1="461.20" x2="853.72" y2="464.20" stroke="#c9ccd2" stroke-width="0.6"/><line x1="898.55" y1="461.20" x2="898.55" y2="464.20" stroke="#c9ccd2" stroke-width="0.6"/><line x1="943.38" y1="461.20" x2="943.38" y2="464.20" stroke="#c9ccd2" stroke-width="0.6"/><line x1="988.21" y1="461.20" x2="988.21" y2="464.20" stroke="#c9ccd2" stroke-width="0.6"/><line x1="1033.04" y1="461.20" x2="1033.04" y2="464.20" stroke="#c9ccd2" stroke-width="0.6"/><path d="M674.40,442.74 C674.40,442.74 705.78,436.28 719.23,433.51 C732.68,430.74 750.61,424.28 764.06,424.28 C777.51,424.28 795.83,433.51 808.89,433.51 C822.73,433.51 839.88,415.05 853.72,415.05 C866.78,415.05 884.96,424.28 898.55,424.28 C911.86,424.28 932.00,424.28 943.38,424.28 C958.90,424.28 976.12,382.75 988.21,382.75 C1003.02,382.75 1033.04,442.74 1033.04,442.74" fill="none" stroke="#4a8ff7" stroke-width="0.9"/><circle cx="674.40" cy="442.74" r="2.6" fill="#2f7cf6"/><circle cx="719.23" cy="433.51" r="2.6" fill="#2f7cf6"/><circle cx="764.06" cy="424.28" r="2.6" fill="#2f7cf6"/><circle cx="808.89" cy="433.51" r="2.6" fill="#2f7cf6"/><circle cx="853.72" cy="415.05" r="2.6" fill="#2f7cf6"/><circle cx="898.55" cy="424.28" r="2.6" fill="#2f7cf6"/><circle cx="943.38" cy="424.28" r="2.6" fill="#2f7cf6"/><circle cx="988.21" cy="382.75" r="2.6" fill="#2f7cf6"/><circle cx="1033.04" cy="442.74" r="2.6" fill="#2f7cf6"/></svg><div class="a" style="left:655.20px;top:434.14px;width:40px;text-align:center;font-size:8.2px;line-height:10px;color:#33363c">4</div><div class="a" style="left:650.20px;top:464.80px;width:50px;text-align:center;font-size:7.6px;line-height:10px;color:#3b3e45">2023年05月</div><div class="a" style="left:700.03px;top:424.91px;width:40px;text-align:center;font-size:8.2px;line-height:10px;color:#33363c">6</div><div class="a" style="left:695.03px;top:464.80px;width:50px;text-align:center;font-size:7.6px;line-height:10px;color:#3b3e45">2023年06月</div><div class="a" style="left:744.86px;top:415.68px;width:40px;text-align:center;font-size:8.2px;line-height:10px;color:#33363c">8</div><div class="a" style="left:739.86px;top:464.80px;width:50px;text-align:center;font-size:7.6px;line-height:10px;color:#3b3e45">2023年07月</div><div class="a" style="left:789.69px;top:424.91px;width:40px;text-align:center;font-size:8.2px;line-height:10px;color:#33363c">6</div><div class="a" style="left:784.69px;top:464.80px;width:50px;text-align:center;font-size:7.6px;line-height:10px;color:#3b3e45">2023年08月</div><div class="a" style="left:834.52px;top:406.45px;width:40px;text-align:center;font-size:8.2px;line-height:10px;color:#33363c">10</div><div class="a" style="left:829.52px;top:464.80px;width:50px;text-align:center;font-size:7.6px;line-height:10px;color:#3b3e45">2023年09月</div><div class="a" style="left:879.35px;top:415.68px;width:40px;text-align:center;font-size:8.2px;line-height:10px;color:#33363c">8</div><div class="a" style="left:874.35px;top:464.80px;width:50px;text-align:center;font-size:7.6px;line-height:10px;color:#3b3e45">2023年10月</div><div class="a" style="left:924.18px;top:415.68px;width:40px;text-align:center;font-size:8.2px;line-height:10px;color:#33363c">8</div><div class="a" style="left:919.18px;top:464.80px;width:50px;text-align:center;font-size:7.6px;line-height:10px;color:#3b3e45">2024年01月</div><div class="a" style="left:969.01px;top:374.14px;width:40px;text-align:center;font-size:8.2px;line-height:10px;color:#33363c">17</div><div class="a" style="left:964.01px;top:464.80px;width:50px;text-align:center;font-size:7.6px;line-height:10px;color:#3b3e45">2024年06月</div><div class="a" style="left:1013.84px;top:434.14px;width:40px;text-align:center;font-size:8.2px;line-height:10px;color:#33363c">4</div><div class="a" style="left:1008.84px;top:464.80px;width:50px;text-align:center;font-size:7.6px;line-height:10px;color:#3b3e45">2024年09月</div><div class="a" style="left:184.2px;top:502.5px;font-size:8.2px;line-height:12px;color:#4a4e57">生产计划明细</div><div class="a" style="left:184.2px;top:520.2px;width:878.5px;height:140px;border:1px solid #cfe0fb;border-bottom:none;background:#fff"></div><div class="a" style="left:184.2px;top:520.2px;width:873.8px;height:39.8px;background:#2b7cfa"></div><div class="a" style="left:184.2px;top:560.00px;width:873.8px;height:45.30px;background:#bcd6fb"></div><div class="a" style="left:184.2px;top:605.30px;width:873.8px;height:44.10px;background:#f4f8fe"></div><div class="a" style="left:184.2px;top:649.40px;width:873.8px;height:50.60px;background:#bcd6fb"></div><div class="a" style="left:184.2px;top:559.55px;width:873.8px;height:0.9px;background:#7fb0f8"></div><div class="a" style="left:184.2px;top:604.85px;width:873.8px;height:0.9px;background:#7fb0f8"></div><div class="a" style="left:184.2px;top:648.95px;width:873.8px;height:0.9px;background:#7fb0f8"></div><div class="a" style="left:739.5px;top:540px;width:318.5px;height:0.9px;background:#76a9fb"></div><div class="a" style="left:183.75px;top:520.20px;width:0.9px;height:39.80px;background:#6ea5fa"></div><div class="a" style="left:183.75px;top:560px;width:0.9px;height:93px;background:#8ab9f9"></div><div class="a" style="left:240.85px;top:520.20px;width:0.9px;height:39.80px;background:#6ea5fa"></div><div class="a" style="left:240.85px;top:560px;width:0.9px;height:93px;background:#8ab9f9"></div><div class="a" style="left:307.85px;top:520.20px;width:0.9px;height:39.80px;background:#6ea5fa"></div><div class="a" style="left:307.85px;top:560px;width:0.9px;height:93px;background:#8ab9f9"></div><div class="a" style="left:386.05px;top:520.20px;width:0.9px;height:39.80px;background:#6ea5fa"></div><div class="a" style="left:386.05px;top:560px;width:0.9px;height:93px;background:#8ab9f9"></div><div class="a" style="left:464.85px;top:520.20px;width:0.9px;height:39.80px;background:#6ea5fa"></div><div class="a" style="left:464.85px;top:560px;width:0.9px;height:93px;background:#8ab9f9"></div><div class="a" style="left:530.85px;top:520.20px;width:0.9px;height:39.80px;background:#6ea5fa"></div><div class="a" style="left:530.85px;top:560px;width:0.9px;height:93px;background:#8ab9f9"></div><div class="a" style="left:598.15px;top:520.20px;width:0.9px;height:39.80px;background:#6ea5fa"></div><div class="a" style="left:598.15px;top:560px;width:0.9px;height:93px;background:#8ab9f9"></div><div class="a" style="left:666.35px;top:520.20px;width:0.9px;height:39.80px;background:#6ea5fa"></div><div class="a" style="left:666.35px;top:560px;width:0.9px;height:93px;background:#8ab9f9"></div><div class="a" style="left:739.05px;top:520.20px;width:0.9px;height:39.80px;background:#6ea5fa"></div><div class="a" style="left:739.05px;top:560px;width:0.9px;height:93px;background:#8ab9f9"></div><div class="a" style="left:840.25px;top:540.30px;width:0.9px;height:19.70px;background:#6ea5fa"></div><div class="a" style="left:840.25px;top:560px;width:0.9px;height:93px;background:#8ab9f9"></div><div class="a" style="left:898.65px;top:540.30px;width:0.9px;height:19.70px;background:#6ea5fa"></div><div class="a" style="left:898.65px;top:560px;width:0.9px;height:93px;background:#8ab9f9"></div><div class="a" style="left:956.85px;top:540.30px;width:0.9px;height:19.70px;background:#6ea5fa"></div><div class="a" style="left:956.85px;top:560px;width:0.9px;height:93px;background:#8ab9f9"></div><div class="a" style="left:1014.25px;top:540.30px;width:0.9px;height:19.70px;background:#6ea5fa"></div><div class="a" style="left:1014.25px;top:560px;width:0.9px;height:93px;background:#8ab9f9"></div><div class="a" style="left:190.60px;top:534.8px;font-size:8px;line-height:12px;color:#fff">计划状态</div><svg class="a" style="left:231.80px;top:536.80px" width="5" height="8" viewBox="0 0 5 8"><path d="M0.7 3.7 L2.5 1.4 L4.3 3.7 Z M0.7 4.2 L2.5 6.5 L4.3 4.2 Z" fill="#fff"/></svg><div class="a" style="left:247.70px;top:534.8px;font-size:8px;line-height:12px;color:#fff">计划标签</div><svg class="a" style="left:298.80px;top:536.80px" width="5" height="8" viewBox="0 0 5 8"><path d="M0.7 3.7 L2.5 1.4 L4.3 3.7 Z M0.7 4.2 L2.5 6.5 L4.3 4.2 Z" fill="#fff"/></svg><div class="a" style="left:314.70px;top:534.8px;font-size:8px;line-height:12px;color:#fff">生产计划名称</div><svg class="a" style="left:377.00px;top:536.80px" width="5" height="8" viewBox="0 0 5 8"><path d="M0.7 3.7 L2.5 1.4 L4.3 3.7 Z M0.7 4.2 L2.5 6.5 L4.3 4.2 Z" fill="#fff"/></svg><div class="a" style="left:392.90px;top:534.8px;font-size:8px;line-height:12px;color:#fff">生产计划编号</div><svg class="a" style="left:455.80px;top:536.80px" width="5" height="8" viewBox="0 0 5 8"><path d="M0.7 3.7 L2.5 1.4 L4.3 3.7 Z M0.7 4.2 L2.5 6.5 L4.3 4.2 Z" fill="#fff"/></svg><div class="a" style="left:471.70px;top:534.8px;font-size:8px;line-height:12px;color:#fff">计划开始日期</div><svg class="a" style="left:521.80px;top:536.80px" width="5" height="8" viewBox="0 0 5 8"><path d="M0.3 3 L2.7 5.4 L5 3 Z" fill="#fff"/></svg><div class="a" style="left:537.70px;top:534.8px;font-size:8px;line-height:12px;color:#fff">计划完工日期</div><svg class="a" style="left:589.10px;top:536.80px" width="5" height="8" viewBox="0 0 5 8"><path d="M0.7 3.7 L2.5 1.4 L4.3 3.7 Z M0.7 4.2 L2.5 6.5 L4.3 4.2 Z" fill="#fff"/></svg><div class="a" style="left:605.00px;top:534.8px;font-size:8px;line-height:12px;color:#fff">订单交货日期</div><svg class="a" style="left:657.30px;top:536.80px" width="5" height="8" viewBox="0 0 5 8"><path d="M0.7 3.7 L2.5 1.4 L4.3 3.7 Z M0.7 4.2 L2.5 6.5 L4.3 4.2 Z" fill="#fff"/></svg><div class="a" style="left:673.20px;top:534.8px;font-size:8px;line-height:12px;color:#fff">销售订单名称</div><svg class="a" style="left:730.00px;top:536.80px" width="5" height="8" viewBox="0 0 5 8"><path d="M0.7 3.7 L2.5 1.4 L4.3 3.7 Z M0.7 4.2 L2.5 6.5 L4.3 4.2 Z" fill="#fff"/></svg><div class="a" style="left:739.5px;top:540px;width:318.5px;height:20px;overflow:hidden"><div class="a" style="left:6.30px;top:5px;font-size:8px;line-height:12px;color:#fff">产品名称</div><div class="a" style="left:107.50px;top:5px;font-size:8px;line-height:12px;color:#fff">产品编码</div><div class="a" style="left:165.90px;top:5px;font-size:8px;line-height:12px;color:#fff">产品属性</div><div class="a" style="left:224.10px;top:5px;font-size:8px;line-height:12px;color:#fff">规格型号</div><div class="a" style="left:281.50px;top:5px;font-size:8px;line-height:12px;color:#fff">计划生产数量</div></div><div class="a" style="left:190.10px;top:564.70px;width:32.80px;height:13.7px;border-radius:2.5px;background:#4a8cf7;color:#fff;font-size:8.4px;line-height:13.7px;text-align:center">已计...</div><div class="a" style="left:247.20px;top:564.70px;width:41.60px;height:13.7px;border-radius:2.5px;background:#1fb5d3;color:#fff;font-size:8.4px;line-height:13.7px;text-align:center">订单计划</div><div class="a" style="left:314.90px;top:565.50px;font-size:7.9px;line-height:12.1px;color:#4e535d">第9月-生产计划<br>2024.9A01</div><div class="a" style="left:393.10px;top:565.50px;font-size:7.9px;line-height:12.1px;color:#4e535d;font-size:7.1px;line-height:12.1px">SCJHXSDD240627-<br>01-240926-01</div><div class="a" style="left:471.90px;top:565.50px;font-size:7.9px;line-height:12.1px;color:#4e535d">2024-09-30</div><div class="a" style="left:537.90px;top:565.50px;font-size:7.9px;line-height:12.1px;color:#4e535d">2024-09-30</div><div class="a" style="left:605.20px;top:565.50px;font-size:7.9px;line-height:12.1px;color:#4e535d">2025-01-15</div><div class="a" style="left:673.40px;top:565.50px;font-size:7.9px;line-height:12.1px;color:#4e535d">示例：无锡简道<br>云-第1份销售订<br>单</div><div class="a" style="left:746.10px;top:565.50px;font-size:7.9px;line-height:12.1px;color:#4e535d">Dell电脑B型-水冷机箱</div><div class="a" style="left:847.30px;top:565.50px;font-size:7.9px;line-height:12.1px;color:#4e535d">C0013</div><div class="a" style="left:905.70px;top:565.50px;font-size:7.9px;line-height:12.1px;color:#4e535d">成品</div><div class="a" style="left:963.90px;top:565.50px;font-size:7.9px;line-height:12.1px;color:#4e535d">B29002</div><div class="a" style="left:190.10px;top:610.00px;width:32.80px;height:13.7px;border-radius:2.5px;background:#2cc36b;color:#fff;font-size:8.4px;line-height:13.7px;text-align:center">已完...</div><div class="a" style="left:247.20px;top:610.00px;width:41.60px;height:13.7px;border-radius:2.5px;background:#1fb5d3;color:#fff;font-size:8.4px;line-height:13.7px;text-align:center">订单计划</div><div class="a" style="left:314.90px;top:610.80px;font-size:7.9px;line-height:12.1px;color:#4e535d">第6月-生产计划<br>2024.6A03</div><div class="a" style="left:393.10px;top:610.80px;font-size:7.9px;line-height:12.1px;color:#4e535d;font-size:7.1px;line-height:12.1px">SCJHXSDD240627-<br>01-240628-02</div><div class="a" style="left:471.90px;top:610.80px;font-size:7.9px;line-height:12.1px;color:#4e535d">2024-06-28</div><div class="a" style="left:537.90px;top:610.80px;font-size:7.9px;line-height:12.1px;color:#4e535d">2024-07-20</div><div class="a" style="left:605.20px;top:610.80px;font-size:7.9px;line-height:12.1px;color:#4e535d">2025-01-15</div><div class="a" style="left:673.40px;top:610.80px;font-size:7.9px;line-height:12.1px;color:#4e535d">示例：无锡简道<br>云-第1份销售订<br>单</div><div class="a" style="left:746.10px;top:610.80px;font-size:7.9px;line-height:12.1px;color:#4e535d">笔记本电脑</div><div class="a" style="left:847.30px;top:610.80px;font-size:7.9px;line-height:12.1px;color:#4e535d">C0005</div><div class="a" style="left:905.70px;top:610.80px;font-size:7.9px;line-height:12.1px;color:#4e535d">成品</div><div class="a" style="left:963.90px;top:610.80px;font-size:7.9px;line-height:12.1px;color:#4e535d">戴尔最新版</div>
